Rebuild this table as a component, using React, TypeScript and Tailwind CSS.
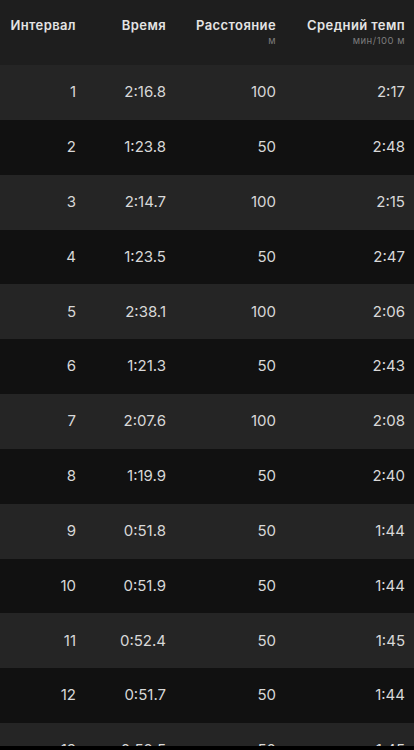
const rows = [
  ["1", "2:16.8", "100", "2:17"],
  ["2", "1:23.8", "50", "2:48"],
  ["3", "2:14.7", "100", "2:15"],
  ["4", "1:23.5", "50", "2:47"],
  ["5", "2:38.1", "100", "2:06"],
  ["6", "1:21.3", "50", "2:43"],
  ["7", "2:07.6", "100", "2:08"],
  ["8", "1:19.9", "50", "2:40"],
  ["9", "0:51.8", "50", "1:44"],
  ["10", "0:51.9", "50", "1:44"],
  ["11", "0:52.4", "50", "1:45"],
  ["12", "0:51.7", "50", "1:44"],
  ["13", "0:52.5", "50", "1:45"],
];

const cols = "grid grid-cols-[76px_90px_110px_129px] pr-[9px]";
const head = "text-[13px] leading-4 font-semibold tracking-[0.4px] text-[#e4e4e4]";
const sub = "mt-[2px] text-[9.5px] leading-[11px] tracking-[0.5px] text-[#7c7c7c]";

export default function App() {
  return (
    <div className="h-[750px] overflow-hidden bg-black font-['Inter',sans-serif]">
      <div className="h-[746px] overflow-hidden">
        {/* header */}
        <div className={`${cols} h-[65px] bg-[#1e1e1e] pt-[17px] text-right`}>
          <div className={head}>Интервал</div>
          <div className={head}>Время</div>
          <div>
            <div className={head}>Расстояние</div>
            <div className={sub}>м</div>
          </div>
          <div>
            <div className={head}>Средний темп</div>
            <div className={sub}>мин/100 м</div>
          </div>
        </div>

        {rows.map((r, i) => (
          <div
            key={r[0]}
            className={`${cols} h-[54.85px] items-center text-right text-[15px] text-[#d8d8d8] ${
              i % 2 === 0 ? "bg-[#252525]" : "bg-[#111111]"
            }`}
          >
            {r.map((c, j) => (
              <div key={j}>{c}</div>
            ))}
          </div>
        ))}
      </div>
    </div>
  );
}
